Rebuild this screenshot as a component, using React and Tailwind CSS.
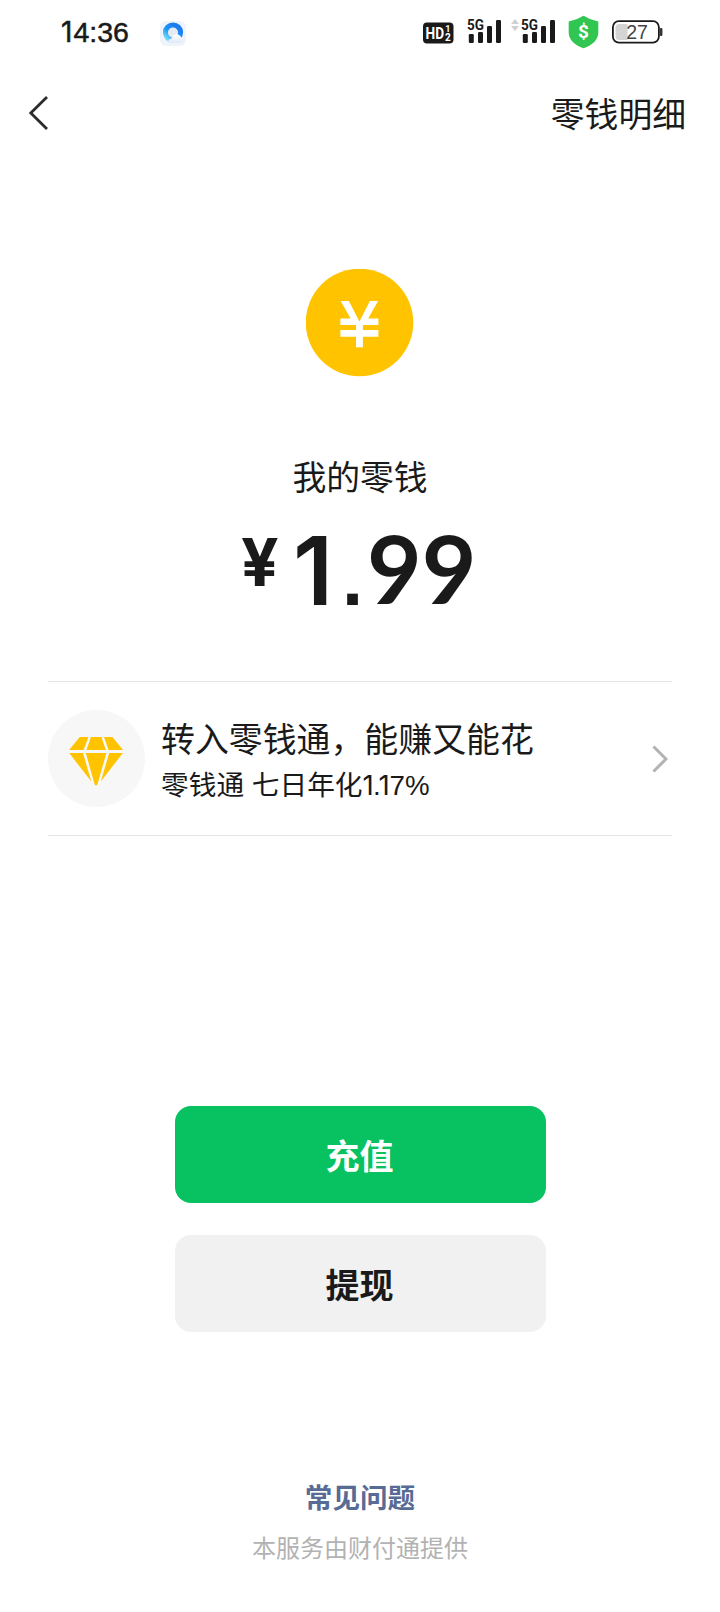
const AppBadge = () => (
  <svg width="28" height="28" viewBox="0 0 28 28">
    <defs>
      <linearGradient id="ring" x1="0.1" y1="0.9" x2="0.7" y2="0.1">
        <stop offset="0" stopColor="#6fd6fb" />
        <stop offset="0.45" stopColor="#1f9bf5" />
        <stop offset="1" stopColor="#1b7df0" />
      </linearGradient>
      <linearGradient id="cloud" x1="0" y1="0" x2="0" y2="1">
        <stop offset="0" stopColor="#ffffff" />
        <stop offset="1" stopColor="#dfe9f6" />
      </linearGradient>
    </defs>
    <rect x="1" y="1" width="26" height="25" rx="6" fill="#eff4fa" />
    <circle cx="14" cy="12.5" r="7.6" fill="#e6ebf2" stroke="url(#ring)" strokeWidth="5" />
    <path
      d="M11.5 23 Q9 22.6 9.4 20.6 Q10.2 19 12.3 18.8 Q13.6 14.4 17.6 14.2 Q21 14.4 22.2 17.4 Q25 18 24.6 20.8 Q24 23 22 23 Z"
      fill="url(#cloud)"
    />
  </svg>
);

const HdIcon = () => (
  <svg width="32" height="22" viewBox="0 0 32 22" fontFamily="Roboto, sans-serif" fontWeight="700" fill="#fff">
    <rect x="0" y="0.5" width="30.5" height="21" rx="4" fill="#1a1a1a" />
    <text x="2.6" y="16.6" fontSize="16.5" textLength="18.5" lengthAdjust="spacingAndGlyphs">HD</text>
    <text x="22.2" y="9.8" fontSize="9">1</text>
    <text x="22" y="19.4" fontSize="10">2</text>
  </svg>
);

const SignalIcon = () => (
  <svg className="overflow-visible" width="38" height="28" viewBox="0 0 38 28" fill="#1a1a1a">
    <text
      x="0"
      y="12.2"
      fontSize="15.5"
      fontWeight="700"
      fontFamily="Roboto, sans-serif"
      textLength="17"
      lengthAdjust="spacingAndGlyphs"
    >
      5G
    </text>
    <rect x="1.8" y="16" width="5" height="9" rx="1.2" />
    <rect x="11" y="14" width="5" height="11" rx="1.2" />
    <rect x="20" y="8" width="5" height="17" rx="1.2" />
    <rect x="29" y="2" width="5" height="23" rx="1.2" />
  </svg>
);

const DataArrows = () => (
  <svg width="8" height="12" viewBox="0 0 8 12" fill="#d0d0d0">
    <path d="M4 0 L8 5 H0 Z M4 12 L8 7 H0 Z" />
  </svg>
);

const ShieldIcon = () => (
  <svg width="32" height="34" viewBox="0 0 32 34">
    <path
      d="M15.5 0.8 Q22.5 5.2 30.3 6.6 V18 Q29.5 28.4 15.5 33.2 Q1.5 28.4 0.7 18 V6.6 Q8.5 5.2 15.5 0.8 Z"
      fill="#31c552"
    />
    <text
      x="15.5"
      y="23.2"
      textAnchor="middle"
      fontSize="19"
      fontWeight="700"
      fontFamily="Roboto, sans-serif"
      fill="#fff"
    >
      $
    </text>
  </svg>
);

const BatteryIcon = () => (
  <svg width="52" height="24" viewBox="0 0 52 24">
    <rect x="0.9" y="1.2" width="46" height="21.4" rx="6" fill="#fff" stroke="#1a1a1a" strokeWidth="1.8" />
    <path d="M15.5 4 H7 Q3.5 4 3.5 7.5 V16.5 Q3.5 20 7 20 H15.5 Z" fill="#d4d4d4" />
    <rect x="48" y="8" width="2.4" height="8" rx="0.8" fill="#333" />
    <text x="25" y="18.8" textAnchor="middle" fontSize="19.5" fontFamily="Liberation Sans, sans-serif" fill="#444">
      27
    </text>
  </svg>
);

const CoinIcon = () => (
  <svg width="108" height="108" viewBox="0 0 108 108">
    <circle cx="53.5" cy="53.5" r="53.8" fill="#ffc300" />
    <path
      d="M34.7 32 H42.9 L53.4 52.5 L63.9 32 H72.1 L62.2 49.5 H72.4 V55.9 H56.9 V61.1 H72.4 V67.7 H56.9 V78.2 H50 V67.7 H34.4 V61.1 H50 V55.9 H34.4 V49.5 H44.6 Z"
      fill="#fff"
    />
  </svg>
);

const DiamondIcon = () => (
  <svg width="54" height="49" viewBox="0 0 54 49" fill="#ffc300">
    <path d="M10.8 0 H19.4 L14.6 13 H0 Z" />
    <path d="M22 0 H32.4 L36.8 13 H17.4 Z" />
    <path d="M35 0 H43.4 L54 13 H39.6 Z" />
    <path d="M0.2 16 H14 L22.3 44.6 Z" />
    <path d="M16.8 16 H37.4 L28.4 47.6 Q27 49.2 25.7 47.6 Z" />
    <path d="M40.2 16 H53.8 L31.8 44.6 Z" />
  </svg>
);

const actions = [
  { label: "充值", className: "bg-[#08c160] text-white" },
  { label: "提现", className: "bg-[#f1f1f1] text-[#1a1a1a]" },
];

const StatusBar = () => (
  <div className="flex h-16 items-center pl-[61px]">
    <div className="mt-[1px] flex w-[70px] items-baseline text-[28.5px] [-webkit-text-stroke:0.5px_#1a1a1a]">
      <span className="w-[12.5px] font-['Inter'] text-[28px]">1</span>
      <span>4:36</span>
    </div>
    <div className="ml-[28px] mt-[3px]">
      <AppBadge />
    </div>
    <div className="ml-[236px] mt-[2px] flex items-center">
      <HdIcon />
      <div className="-mt-[2px] ml-[12px]">
        <SignalIcon />
      </div>
      <div className="-mt-[17px] ml-[6px]">
        <DataArrows />
      </div>
      <div className="-mt-[2px] ml-[2px]">
        <SignalIcon />
      </div>
      <div className="-mt-[3px] ml-[9px]">
        <ShieldIcon />
      </div>
      <div className="-mt-[3px] ml-[12px]">
        <BatteryIcon />
      </div>
    </div>
  </div>
);

const App = () => {
  return (
    <div className="flex h-[1612px] w-[720px] flex-col overflow-hidden bg-white font-['Liberation_Sans','Noto_Sans_CJK_SC',sans-serif] text-[#1a1a1a]">
      <StatusBar />

      {/* Navigation */}
      <header className="flex h-[100px] items-center justify-between pl-[28px] pr-[34px]">
        <svg width="21" height="36" viewBox="0 0 21 36" fill="none" stroke="#2b2b2b" strokeWidth="2.8">
          <path d="M19 1 L2.8 17 L19 33" />
        </svg>
        <span className="pt-[2px] text-[33.8px] leading-[50px]">零钱明细</span>
      </header>

      {/* Balance */}
      <section className="flex flex-col items-center pt-[105px]">
        <CoinIcon />
        <p className="mt-[76px] text-[33.8px] leading-[50px]">我的零钱</p>
        <div className="mt-[16px] flex h-[100px] w-[238px] items-start">
          <span className="mt-[8px] w-[52px] font-['Inter'] text-[66px] font-bold leading-[70px]">¥</span>
          <span className="mt-[2px] w-[49px] font-['Inter'] text-[95px] font-semibold leading-[100px]">1</span>
          <span className="mt-[10px] w-[25px] font-['Liberation_Sans'] text-[76px] font-bold leading-[100px]">.</span>
          <span className="-mt-[1px] font-['Lato'] text-[94.5px] font-bold leading-[100px]">99</span>
        </div>
      </section>

      {/* LQT entry */}
      <section className="mx-12 mt-[62px] flex h-[155px] items-center border-y border-[#e5e5e5]">
        <div className="flex size-[97px] items-center justify-center rounded-full bg-[#f7f7f7] pr-[1px] pt-[5px]">
          <DiamondIcon />
        </div>
        <div className="ml-[16px] flex-1 pt-[7px]">
          <p className="text-[33.9px] leading-[47px]">转入零钱通，能赚又能花</p>
          <p className="flex items-baseline text-[27.7px] leading-[43px]">
            <span>零钱通 七日年化</span>
            <span className="w-[10.5px] font-['Inter'] leading-none">1</span>
            <span className="w-[5.5px]">.</span>
            <span className="w-[11px] font-['Inter'] leading-none">1</span>
            <span>7%</span>
          </p>
        </div>
        <svg className="mr-[4px]" width="16" height="28" viewBox="0 0 16 28" fill="none" stroke="#b2b2b2" strokeWidth="3">
          <path d="M1.5 1.5 L14 14 L1.5 26.5" />
        </svg>
      </section>

      {/* Actions */}
      <div className="ml-[175px] mt-[270px] flex w-[371px] flex-col gap-8">
        {actions.map(({ label, className }) => (
          <button
            key={label}
            className={`h-[97px] rounded-[16px] pr-[2px] pt-[5px] text-[34px] font-bold ${className}`}
          >
            {label}
          </button>
        ))}
      </div>

      <footer className="mt-[147px] flex flex-col items-center">
        <a className="text-[27.6px] font-bold leading-[40px] text-[#576b95]">常见问题</a>
        <p className="mt-[13px] text-[24px] leading-[34px] text-[#b2b2b2]">本服务由财付通提供</p>
      </footer>
    </div>
  );
};

export default App;
